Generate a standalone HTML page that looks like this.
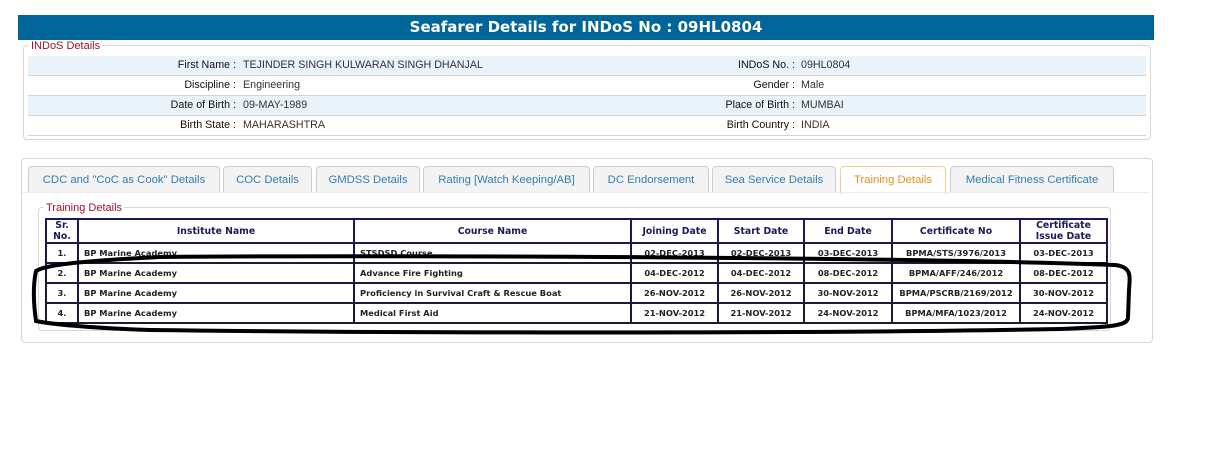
<!DOCTYPE html>
<html><head><meta charset="utf-8"><style>
body{margin:0;background:#fff;width:1221px;height:460px;position:relative;font-family:"Liberation Sans",Arial,sans-serif;overflow:hidden}
.abs{position:absolute}
.title{left:18px;top:15px;width:1136px;height:25px;background:#006699;color:#fff;font:bold 15px "DejaVu Sans",sans-serif;text-align:center;line-height:25px}
.fs{border:1px solid #d6d6d6;border-radius:4px}
.legend{font-size:11px;color:#a0102a;background:#fff;padding:0 2px}
.row{position:absolute;left:28px;width:1118px;height:19px;border-bottom:1px solid #d4d4d4;font-size:10.7px;line-height:19px;color:#333}
.row.alt{background:#eaf2fa}
.row span{position:absolute}
.lb{text-align:right;color:#111}
.tab{position:absolute;top:166px;height:26px;border:1px solid #ccc;border-bottom:none;border-radius:4px 4px 0 0;background:#f3f3f3;color:#2e7fb5;font-size:11.3px;line-height:26px;text-align:center}
.tab.act{background:#fff;border-color:#f0d090;color:#e8901e;height:27px}
table{position:absolute;left:45px;top:218px;width:1061px;table-layout:fixed;border-collapse:collapse;font:bold 8.3px "DejaVu Sans",Verdana,sans-serif;color:#222}
td,th{border:2px solid #1a1a3a;padding:0 5px;height:18px;white-space:nowrap;overflow:hidden}
th{color:#1a1a5a;font-size:9.3px;height:21px;border-color:#1a1a5a;line-height:11px}
td.c{text-align:center}
</style></head><body>
<div class="abs title">Seafarer Details for INDoS No : 09HL0804</div>
<div class="abs fs" style="left:23px;top:45px;width:1126px;height:93px"></div>
<div class="abs legend" style="left:29px;top:40px">INDoS Details</div>
<div class="row alt" style="top:56px"><span class="lb" style="right:910px">First Name :</span><span style="left:215px">TEJINDER SINGH KULWARAN SINGH DHANJAL</span><span class="lb" style="right:351px">INDoS No. :</span><span style="left:773px">09HL0804</span></div>
<div class="row" style="top:76px"><span class="lb" style="right:910px">Discipline :</span><span style="left:215px">Engineering</span><span class="lb" style="right:351px">Gender :</span><span style="left:773px">Male</span></div>
<div class="row alt" style="top:96px"><span class="lb" style="right:910px">Date of Birth :</span><span style="left:215px">09-MAY-1989</span><span class="lb" style="right:351px">Place of Birth :</span><span style="left:773px">MUMBAI</span></div>
<div class="row" style="top:116px"><span class="lb" style="right:910px">Birth State :</span><span style="left:215px">MAHARASHTRA</span><span class="lb" style="right:351px">Birth Country :</span><span style="left:773px">INDIA</span></div>

<div class="abs fs" style="left:21px;top:158px;width:1130px;height:183px"></div>
<div class="tab" style="left:28px;width:190px">CDC and "CoC as Cook" Details</div>
<div class="tab" style="left:223px;width:87px">COC Details</div>
<div class="tab" style="left:316px;width:102px">GMDSS Details</div>
<div class="tab" style="left:423px;width:165px">Rating [Watch Keeping/AB]</div>
<div class="tab" style="left:593px;width:114px">DC Endorsement</div>
<div class="tab" style="left:712px;width:122px">Sea Service Details</div>
<div class="tab act" style="left:840px;width:104px">Training Details</div>
<div class="tab" style="left:950px;width:162px">Medical Fitness Certificate</div>
<div class="abs" style="left:22px;top:192px;width:1128px;border-top:1px solid #eee"></div>

<div class="abs fs" style="left:38px;top:207px;width:1071px;height:122px"></div>
<div class="abs legend" style="left:44px;top:202px">Training Details</div>
<table>
<colgroup><col style="width:32px"><col style="width:276px"><col style="width:277px"><col style="width:87px"><col style="width:86px"><col style="width:88px"><col style="width:128px"><col style="width:87px"></colgroup>
<tr><th>Sr.<br>No.</th><th>Institute Name</th><th>Course Name</th><th>Joining Date</th><th>Start Date</th><th>End Date</th><th>Certificate No</th><th>Certificate<br>Issue Date</th></tr>
<tr><td class="c">1.</td><td>BP Marine Academy</td><td>STSDSD Course</td><td class="c">02-DEC-2013</td><td class="c">02-DEC-2013</td><td class="c">03-DEC-2013</td><td class="c">BPMA/STS/3976/2013</td><td class="c">03-DEC-2013</td></tr>
<tr><td class="c">2.</td><td>BP Marine Academy</td><td>Advance Fire Fighting</td><td class="c">04-DEC-2012</td><td class="c">04-DEC-2012</td><td class="c">08-DEC-2012</td><td class="c">BPMA/AFF/246/2012</td><td class="c">08-DEC-2012</td></tr>
<tr><td class="c">3.</td><td>BP Marine Academy</td><td>Proficiency in Survival Craft &amp; Rescue Boat</td><td class="c">26-NOV-2012</td><td class="c">26-NOV-2012</td><td class="c">30-NOV-2012</td><td class="c">BPMA/PSCRB/2169/2012</td><td class="c">30-NOV-2012</td></tr>
<tr><td class="c">4.</td><td>BP Marine Academy</td><td>Medical First Aid</td><td class="c">21-NOV-2012</td><td class="c">21-NOV-2012</td><td class="c">24-NOV-2012</td><td class="c">BPMA/MFA/1023/2012</td><td class="c">24-NOV-2012</td></tr>
</table>
<svg class="abs" style="left:0;top:0" width="1221" height="460">
<path d="M160 257 C400 255 900 257 1115 265 C1132 267 1130 276 1129 290 L1128 318 C1127 326 1110 327 1060 329 C800 334 400 333 150 330 C90 328 50 324 36 321 C33 300 33 285 36 271 C45 265 80 261 160 257 Z" fill="none" stroke="#000" stroke-width="4"/>
</svg>
</body></html>
